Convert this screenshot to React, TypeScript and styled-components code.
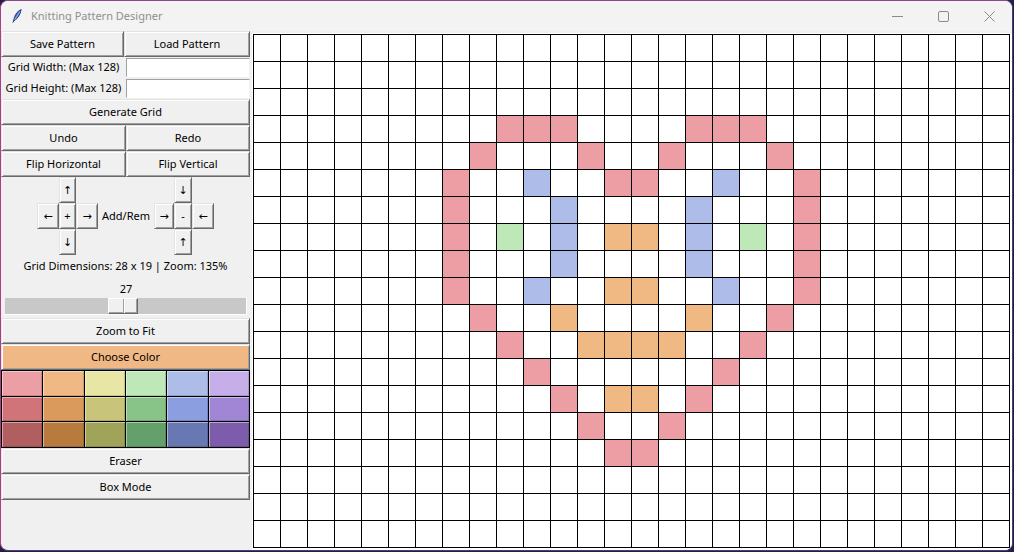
import React from "react";
import styled, { createGlobalStyle } from "styled-components";

const FONT = `"Noto Sans", "DejaVu Sans", sans-serif`;
const FS = "11px";

const GlobalStyle = createGlobalStyle`
  html, body { margin: 0; padding: 0; width: 1014px; height: 552px; overflow: hidden; background: #241d45; }
  #root { width: 1014px; height: 552px; }
  * { box-sizing: border-box; }
`;

const Window = styled.div`
  width: 1013px;
  height: 551px;
  background: #f0f0f0;
  border: 1px solid #4a3f72;
  border-left-color: #a84088;
  border-top-color: #8c4a8c;
  border-radius: 8px;
  overflow: hidden;
  display: flex;
  flex-direction: column;
  font-family: ${FONT};
`;

const TitleBar = styled.div`
  height: 30px;
  flex: none;
  display: flex;
  align-items: center;
  background: #f3f3f3;
  padding-left: 11px;
`;

const TitleText = styled.span`
  margin-left: 9px;
  padding-bottom: 2px;
  font-size: ${FS};
  color: #8f8f8f;
`;

const TitleControls = styled.div`
  margin-left: auto;
  display: flex;
  height: 100%;
`;

const CtrlBox = styled.div`
  width: 46px;
  height: 100%;
  display: flex;
  align-items: center;
  justify-content: center;
`;

const Body = styled.div`
  flex: 1;
  display: flex;
  min-height: 0;
`;

const LeftPanel = styled.div`
  width: 249px;
  flex: none;
  display: flex;
  flex-direction: column;
`;

const TkButton = styled.button<{ $bg?: string }>`
  height: 26px;
  margin: 0;
  padding: 0 0 2px 0;
  display: flex;
  align-items: center;
  justify-content: center;
  background: ${(p) => p.$bg ?? "#f0f0f0"};
  border: 1px solid;
  border-color: #e3e3e3 #696969 #696969 #e3e3e3;
  box-shadow: inset 1px 1px 0 #ffffff, inset -1px -1px 0 #a0a0a0;
  font-family: ${FONT};
  font-size: ${FS};
  color: #000;
  white-space: nowrap;
`;

const ButtonRow = styled.div<{ $first: number }>`
  display: grid;
  grid-template-columns: ${(p) => p.$first}px 1fr;
`;

const FieldRow = styled.div`
  height: 21px;
  display: grid;
  grid-template-columns: 125px 1fr;
  align-items: center;
`;

const FieldLabel = styled.span`
  font-size: ${FS};
  text-align: center;
  color: #000;
  white-space: nowrap;
  padding-bottom: 2px;
`;

const Entry = styled.div`
  height: 19px;
  background: #fff;
  border-top: 1px solid #a0a0a0;
  border-left: 1px solid #a0a0a0;
  border-right: 1px solid #f0f0f0;
  border-bottom: 1px solid #ffffff;
`;

const ArrowArea = styled.div`
  height: 78px;
  display: flex;
  align-items: center;
  justify-content: center;
`;

const Cross = styled.div<{ $cols: string }>`
  display: grid;
  grid-template-columns: ${(p) => p.$cols};
  grid-template-rows: repeat(3, 26px);
`;

const ArrowBtn = styled(TkButton)<{ $r: number; $c: number }>`
  grid-row: ${(p) => p.$r};
  grid-column: ${(p) => p.$c};
  font-size: 11px;
`;

const CrossLabel = styled.span`
  width: 56px;
  text-align: center;
  font-size: ${FS};
  white-space: nowrap;
  padding-bottom: 2px;
`;

const InfoLabel = styled.div`
  height: 23px;
  display: flex;
  align-items: center;
  justify-content: center;
  font-size: ${FS};
  white-space: nowrap;
  padding-bottom: 2px;
`;

const ScaleBlock = styled.div`
  height: 40px;
  padding: 3px 3px 0 3px;
  display: flex;
  flex-direction: column;
`;

const ScaleValue = styled.div`
  height: 16px;
  font-size: ${FS};
  line-height: 16px;
  text-align: center;
  padding-left: 1px;
`;

const Trough = styled.div`
  position: relative;
  height: 18px;
  background: #c8c8c8;
  border: 1px solid #f0f0f0;
  border-bottom-color: #fff;
  border-right-color: #fff;
`;

const Thumb = styled.div`
  position: absolute;
  top: 0;
  width: 30px;
  height: 16px;
  display: flex;
  background: #f0f0f0;
  border: 1px solid;
  border-color: #ffffff #696969 #696969 #ffffff;
  box-shadow: inset -1px -1px 0 #a0a0a0;
`;

const ThumbHalf = styled.div`
  flex: 1;
  & + & {
    border-left: 1px solid #a0a0a0;
    box-shadow: inset 1px 0 0 #ffffff;
  }
`;

const Palette = styled.div`
  height: 78px;
  display: grid;
  grid-template-columns: repeat(6, 1fr);
  grid-template-rows: repeat(3, 1fr);
  border-top: 1px solid #000;
  border-left: 1px solid #000;
`;

const Swatch = styled.div<{ $c: string }>`
  background: ${(p) => p.$c};
  border-right: 1px solid #000;
  border-bottom: 1px solid #000;
  box-shadow: inset 1px 1px 0 rgba(255, 255, 255, 0.45), inset -1px -1px 0 rgba(0, 0, 0, 0.15);
`;

const CanvasArea = styled.div`
  flex: 1;
  margin: 2px 0 0 2px;
  padding: 1px 0 0 1px;
  background: #fff;
`;

const Grid = styled.div`
  display: grid;
  grid-template-columns: repeat(28, 26px);
  grid-template-rows: repeat(19, 26px);
  gap: 1px;
  padding: 1px;
  background: #000;
  width: max-content;
`;

const Cell = styled.div<{ $c?: string }>`
  background: ${(p) => p.$c ?? "#fff"};
`;

const COLORS: Record<string, string> = {
  p: "#ec9ea4",
  b: "#adbce8",
  g: "#bee8b7",
  o: "#f0b984",
};

const PATTERN: Record<number, [number, string][]> = {
  3: [[9, "p"], [10, "p"], [11, "p"], [16, "p"], [17, "p"], [18, "p"]],
  4: [[8, "p"], [12, "p"], [15, "p"], [19, "p"]],
  5: [[7, "p"], [10, "b"], [13, "p"], [14, "p"], [17, "b"], [20, "p"]],
  6: [[7, "p"], [11, "b"], [16, "b"], [20, "p"]],
  7: [[7, "p"], [9, "g"], [11, "b"], [13, "o"], [14, "o"], [16, "b"], [18, "g"], [20, "p"]],
  8: [[7, "p"], [11, "b"], [16, "b"], [20, "p"]],
  9: [[7, "p"], [10, "b"], [13, "o"], [14, "o"], [17, "b"], [20, "p"]],
  10: [[8, "p"], [11, "o"], [16, "o"], [19, "p"]],
  11: [[9, "p"], [12, "o"], [13, "o"], [14, "o"], [15, "o"], [18, "p"]],
  12: [[10, "p"], [17, "p"]],
  13: [[11, "p"], [13, "o"], [14, "o"], [16, "p"]],
  14: [[12, "p"], [15, "p"]],
  15: [[13, "p"], [14, "p"]],
};

const SWATCHES = [
  "#eb9ea3", "#f0b884", "#e8e6a4", "#bee8b8", "#adbde8", "#c6aee8",
  "#d07479", "#d99a5b", "#c8c47a", "#88c488", "#8a9ee0", "#a286d6",
  "#b05e60", "#b87b3e", "#a0a458", "#64a06c", "#6878b2", "#7e5cac",
];

const ROWS = 19;
const COLS = 28;

function cellColor(r: number, c: number): string | undefined {
  const row = PATTERN[r];
  if (!row) return undefined;
  const hit = row.find(([col]) => col === c);
  return hit ? COLORS[hit[1]] : undefined;
}

const Feather = () => (
  <svg width="10" height="14" viewBox="0 0 10 14">
    <path d="M9.2 0.6 C6 1.8 3.2 5 2.2 9.2 L1.6 11.6 L2.6 11.4 C5.6 9.6 8.4 5.4 9.2 0.6 Z" fill="#3a6fd0" stroke="#1a2a5a" strokeWidth="0.8" />
    <path d="M8.2 2.2 L2.4 11.2" stroke="#bcd4ff" strokeWidth="0.7" />
    <path d="M2.2 11 L0.8 13.6" stroke="#1a2a5a" strokeWidth="1" />
  </svg>
);

export default function App() {
  const thumbLeft = 103;
  return (
    <>
      <GlobalStyle />
      <Window>
        <TitleBar>
          <Feather />
          <TitleText>Knitting Pattern Designer</TitleText>
          <TitleControls>
            <CtrlBox>
              <svg width="11" height="11" viewBox="0 0 11 11">
                <path d="M0 5.5 H11" stroke="#8a8a8a" strokeWidth="1" />
              </svg>
            </CtrlBox>
            <CtrlBox>
              <svg width="11" height="11" viewBox="0 0 11 11">
                <rect x="0.5" y="0.5" width="10" height="10" rx="1.5" fill="none" stroke="#8a8a8a" strokeWidth="1" />
              </svg>
            </CtrlBox>
            <CtrlBox>
              <svg width="11" height="11" viewBox="0 0 11 11">
                <path d="M0.5 0.5 L10.5 10.5 M10.5 0.5 L0.5 10.5" stroke="#8a8a8a" strokeWidth="1" />
              </svg>
            </CtrlBox>
          </TitleControls>
        </TitleBar>
        <Body>
          <LeftPanel>
            <ButtonRow $first={123}>
              <TkButton>Save Pattern</TkButton>
              <TkButton>Load Pattern</TkButton>
            </ButtonRow>
            <FieldRow>
              <FieldLabel>Grid Width: (Max 128)</FieldLabel>
              <Entry />
            </FieldRow>
            <FieldRow>
              <FieldLabel>Grid Height: (Max 128)</FieldLabel>
              <Entry />
            </FieldRow>
            <TkButton>Generate Grid</TkButton>
            <ButtonRow $first={125}>
              <TkButton>Undo</TkButton>
              <TkButton>Redo</TkButton>
            </ButtonRow>
            <ButtonRow $first={125}>
              <TkButton>Flip Horizontal</TkButton>
              <TkButton>Flip Vertical</TkButton>
            </ButtonRow>
            <ArrowArea>
              <Cross $cols="22px 17px 22px">
                <ArrowBtn $r={1} $c={2}>↑</ArrowBtn>
                <ArrowBtn $r={2} $c={1}>←</ArrowBtn>
                <ArrowBtn $r={2} $c={2}>+</ArrowBtn>
                <ArrowBtn $r={2} $c={3}>→</ArrowBtn>
                <ArrowBtn $r={3} $c={2}>↓</ArrowBtn>
              </Cross>
              <CrossLabel>Add/Rem</CrossLabel>
              <Cross $cols="20px 18px 22px">
                <ArrowBtn $r={1} $c={2}>↓</ArrowBtn>
                <ArrowBtn $r={2} $c={1}>→</ArrowBtn>
                <ArrowBtn $r={2} $c={2}>-</ArrowBtn>
                <ArrowBtn $r={2} $c={3}>←</ArrowBtn>
                <ArrowBtn $r={3} $c={2}>↑</ArrowBtn>
              </Cross>
            </ArrowArea>
            <InfoLabel>Grid Dimensions: 28 x 19 | Zoom: 135%</InfoLabel>
            <ScaleBlock>
              <ScaleValue>27</ScaleValue>
              <Trough>
                <Thumb style={{ left: thumbLeft }}>
                  <ThumbHalf />
                  <ThumbHalf />
                </Thumb>
              </Trough>
            </ScaleBlock>
            <TkButton>Zoom to Fit</TkButton>
            <TkButton $bg="#f0b884">Choose Color</TkButton>
            <Palette>
              {SWATCHES.map((c, i) => (
                <Swatch key={i} $c={c} />
              ))}
            </Palette>
            <TkButton>Eraser</TkButton>
            <TkButton>Box Mode</TkButton>
          </LeftPanel>
          <CanvasArea>
            <Grid>
              {Array.from({ length: ROWS * COLS }, (_, i) => {
                const r = Math.floor(i / COLS);
                const c = i % COLS;
                return <Cell key={i} $c={cellColor(r, c)} />;
              })}
            </Grid>
          </CanvasArea>
        </Body>
      </Window>
    </>
  );
}
